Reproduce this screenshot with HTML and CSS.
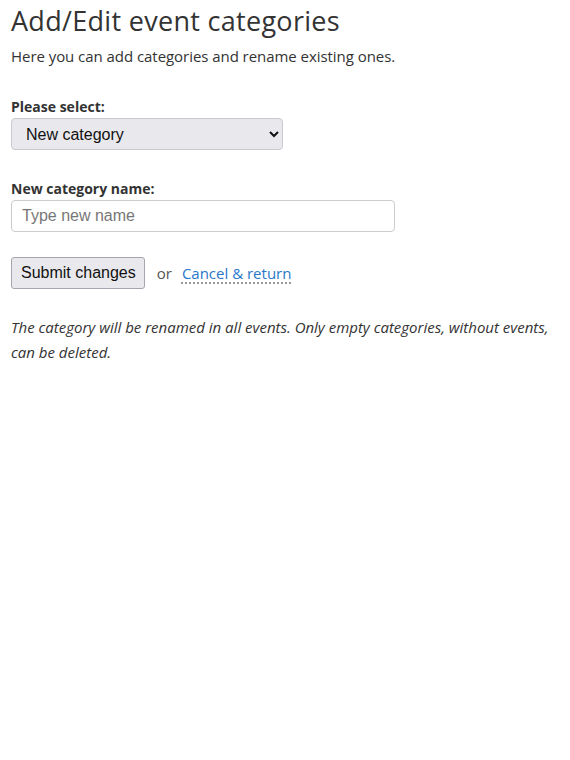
FILE: index.html
```html
<!DOCTYPE html>
<html>
<head>
<meta charset="utf-8">
<link rel="stylesheet" href="styles.css">
</head>
<body>
<main class="page">
  <h1 class="title">Add/Edit event categories</h1>
  <p class="intro">Here you can add categories and rename existing ones.</p>
  <form class="form">
    <div class="field">
      <label class="label" for="cat">Please select:</label>
      <select id="cat" class="select">
        <option>New category</option>
      </select>
    </div>
    <div class="field">
      <label class="label" for="name">New category name:</label>
      <input id="name" class="input" type="text" placeholder="Type new name">
    </div>
    <div class="actions">
      <button type="button" class="button">Submit changes</button>
      <span class="or">or</span>
      <a href="#" class="link">Cancel &amp; return</a>
    </div>
  </form>
  <p class="note">The category will be renamed in all events. Only empty categories, without events, can be deleted.</p>
</main>
</body>
</html>
```
FILE: styles.css
```css
html, body {
  margin: 0;
  padding: 0;
  background: #fff;
}
body {
  font-family: "Open Sans", "Liberation Sans", sans-serif;
  color: #333;
}
.page {
  padding: 5px 11px;
}
.title {
  font-weight: 400;
  font-size: 27px;
  line-height: 32px;
  letter-spacing: 0.3px;
  margin: 0;
  color: #333;
}
.intro {
  font-size: 15px;
  line-height: 22px;
  letter-spacing: -0.05px;
  margin: 8px 0 0;
}
.form {
  margin-top: 30px;
}
.field {
  display: flex;
  flex-direction: column;
  align-items: flex-start;
  margin-bottom: 29px;
}
.label {
  font-weight: 700;
  font-size: 14px;
  line-height: 20px;
  margin-bottom: 1px;
}
.select {
  width: 272px;
  height: 32px;
  font-family: "Liberation Sans", Arial, sans-serif;
  font-size: 16px;
  color: #111;
  background: #e9e9ed;
  border: 1px solid #c9c9cf;
  border-radius: 4px;
  padding: 0 10px;
}
.input {
  box-sizing: border-box;
  width: 384px;
  height: 32px;
  font-family: "Liberation Sans", Arial, sans-serif;
  font-size: 16px;
  border: 1px solid #ccc;
  border-radius: 4px;
  padding: 0 10px;
}
.input::placeholder {
  color: #777;
}
.actions {
  display: flex;
  align-items: center;
  gap: 12px;
  margin-top: -4px;
}
.button {
  box-sizing: border-box;
  height: 32px;
  font-family: "Liberation Sans", Arial, sans-serif;
  font-size: 16px;
  color: #111;
  background: #e9e9ed;
  border: 1px solid #a5a5ad;
  border-radius: 3px;
  padding: 0 8px 0 9px;
}
.or {
  font-size: 15px;
  color: #555;
}
.link {
  font-size: 15px;
  color: #2a77c9;
  text-decoration: underline dotted #777;
  text-underline-offset: 4px;
  margin-left: -2px;
}
.note {
  font-style: italic;
  font-size: 15px;
  line-height: 25px;
  margin: 26px 0 0;
}
```
